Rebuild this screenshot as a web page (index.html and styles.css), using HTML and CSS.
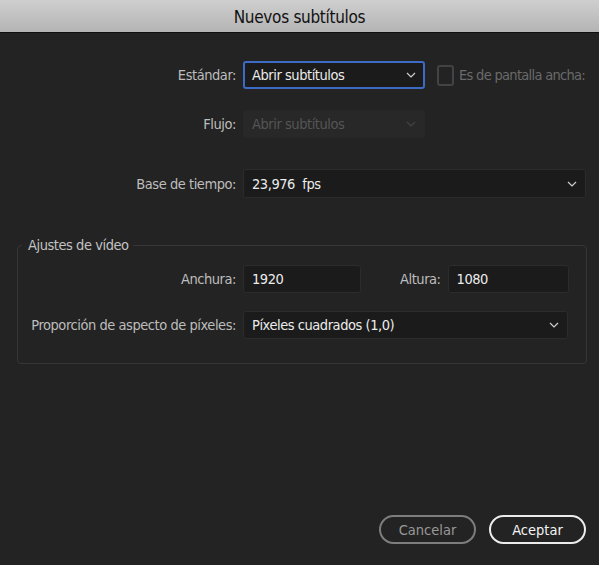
FILE: index.html
```html
<!DOCTYPE html>
<html lang="es">
<head>
<meta charset="utf-8">
<title>Nuevos subtítulos</title>
<link rel="stylesheet" href="styles.css">
</head>
<body>
<div class="dialog">
  <header class="titlebar">Nuevos subtítulos</header>
  <main class="content">
    <div class="row row-std">
      <span class="label">Estándar:</span>
      <div class="select focused short"><span>Abrir subtítulos</span><svg class="chev" viewBox="0 0 10 6"><path d="M1 1 L5 5 L9 1"/></svg></div>
      <div class="check"><span class="box"></span><span class="check-label">Es de pantalla ancha:</span></div>
    </div>
    <div class="row row-flujo">
      <span class="label">Flujo:</span>
      <div class="select disabled short"><span>Abrir subtítulos</span><svg class="chev" viewBox="0 0 10 6"><path d="M1 1 L5 5 L9 1"/></svg></div>
    </div>
    <div class="row row-base">
      <span class="label">Base de tiempo:</span>
      <div class="select wide"><span>23,976&nbsp; fps</span><svg class="chev" viewBox="0 0 10 6"><path d="M1 1 L5 5 L9 1"/></svg></div>
    </div>
    <fieldset class="group">
      <legend>Ajustes de vídeo</legend>
      <div class="row row-size">
        <span class="label inner">Anchura:</span>
        <div class="field w">1920</div>
        <span class="label alt">Altura:</span>
        <div class="field h">1080</div>
      </div>
      <div class="row row-par">
        <span class="label inner">Proporción de aspecto de píxeles:</span>
        <div class="select par"><span>Píxeles cuadrados (1,0)</span><svg class="chev" viewBox="0 0 10 6"><path d="M1 1 L5 5 L9 1"/></svg></div>
      </div>
    </fieldset>
    <div class="buttons">
      <button class="btn cancel">Cancelar</button>
      <button class="btn ok">Aceptar</button>
    </div>
  </main>
</div>
</body>
</html>
```

FILE: styles.css
```css
* { box-sizing: border-box; }
html, body {
  margin: 0;
  padding: 0;
  background: #232323;
}
body {
  width: 599px;
  height: 565px;
  overflow: hidden;
  font-family: "DejaVu Sans Condensed", "Liberation Sans", sans-serif;
  font-size: 14.5px;
  letter-spacing: -0.45px;
  color: #bdbdbd;
}
.dialog {
  height: 565px;
  display: flex;
  flex-direction: column;
}
.titlebar {
  height: 33px;
  flex: none;
  background: linear-gradient(#cfcfcf, #b4b4b4);
  border-bottom: 1px solid #0e0e0e;
  color: #111;
  font-size: 17px;
  letter-spacing: -0.3px;
  text-align: center;
  line-height: 34px;
}
.content {
  flex: 1;
  display: flex;
  flex-direction: column;
  padding: 28px 13px 21px 17px;
}
.row {
  display: flex;
  align-items: center;
}
.label {
  width: 219px;
  flex: none;
  text-align: right;
  margin-right: 7px;
  white-space: nowrap;
}
.select, .field {
  height: 28px;
  border-radius: 3px;
  display: flex;
  align-items: center;
  padding: 0 8px;
  color: #ececec;
  background: #1b1b1b;
  border: 1px solid #2c2c2c;
  white-space: nowrap;
  flex: none;
}
.select span { flex: 1; }
.chev {
  width: 10px;
  height: 6px;
  fill: none;
  stroke: #cfcfcf;
  stroke-width: 1.2;
}
.short { width: 182px; }
.focused {
  border: 2px solid #3c6ac4;
  padding: 0 7px;
}
.disabled {
  background: #282828;
  border-color: #282828;
  color: #555;
}
.disabled .chev { stroke: #444; }
.row-flujo { margin-top: 21px; }
.row-base { margin-top: 31px; }
.wide { width: 343px; height: 29px; }
.check {
  display: flex;
  align-items: center;
  margin-left: 12px;
  color: #6a6a6a;
  white-space: nowrap;
}
.check-label { letter-spacing: -0.7px; }
.box {
  width: 17px;
  height: 21px;
  border: 2px solid #434343;
  border-radius: 3px;
  margin-right: 5px;
  flex: none;
}
.group {
  margin: 39px 0 0 0;
  width: 570px;
  height: 127px;
  border: 1px solid #363636;
  border-radius: 4px;
  padding: 12px 0 0 0;
  min-width: 0;
}
.group legend {
  padding: 0 4px 0 6px;
  margin-left: 4px;
  color: #c2c2c2;
}
.label.inner { width: 218px; }
.field.w { width: 118px; }
.label.alt {
  width: auto;
  margin-left: 39px;
  margin-right: 7px;
}
.field.h { width: 121px; }
.row-par { margin-top: 18px; }
.select.par { width: 325px; }
.buttons {
  margin-top: auto;
  display: flex;
  justify-content: flex-end;
  gap: 13px;
}
.btn {
  font: inherit;
  width: 97px;
  height: 29px;
  border-radius: 15px;
  background: transparent;
  padding: 0;
}
.cancel {
  border: 2px solid #7d7d7d;
  color: #989898;
}
.ok {
  border: 2px solid #ececec;
  color: #f4f4f4;
}
```
